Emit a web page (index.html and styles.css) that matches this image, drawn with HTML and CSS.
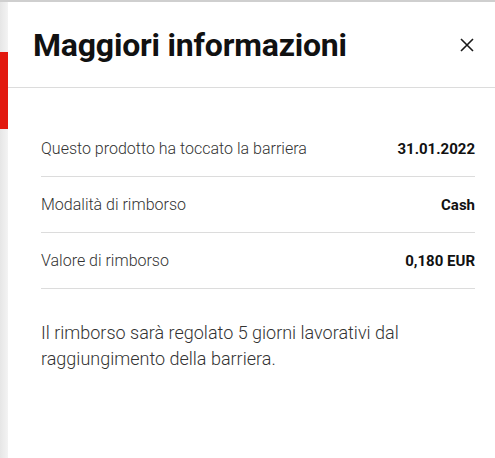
FILE: index.html
```html
<!DOCTYPE html>
<html lang="it">
<head>
<meta charset="utf-8">
<link rel="stylesheet" href="styles.css">
</head>
<body>
<div class="page">
  <aside class="side"><div class="side-mark"></div></aside>
  <section class="panel">
    <header class="head">
      <h1 class="title">Maggiori informazioni</h1>
      <button class="close" aria-label="Chiudi">
        <svg width="14" height="14" viewBox="0 0 14 14"><path d="M1 1 L13 13 M13 1 L1 13" stroke="#1a1a1a" stroke-width="1.6" fill="none"/></svg>
      </button>
    </header>
    <div class="body">
      <dl class="list">
        <div class="row"><dt>Questo prodotto ha toccato la barriera</dt><dd>31.01.2022</dd></div>
        <div class="row"><dt>Modalità di rimborso</dt><dd>Cash</dd></div>
        <div class="row"><dt>Valore di rimborso</dt><dd>0,180 EUR</dd></div>
      </dl>
      <p class="note">Il rimborso sarà regolato 5 giorni lavorativi dal raggiungimento della barriera.</p>
    </div>
  </section>
</div>
</body>
</html>
```
FILE: styles.css
```css
html, body { margin: 0; padding: 0; background: #fff; }
body { font-family: Roboto, "Liberation Sans", sans-serif; color: #1a1a1a; }
.page { display: flex; min-height: 458px; border-top: 2px solid #cfcfcf; box-sizing: border-box; }
.side { width: 8px; flex: none; background: linear-gradient(to right, #e6e6e6, #f3f3f3); padding-top: 50px; }
.side-mark { height: 77px; background: #e2190f; }
.panel { flex: 1; }
.head { display: flex; align-items: center; justify-content: space-between; height: 86px; padding: 0 21px 0 25px; border-bottom: 1px solid #dcdcdc; box-sizing: border-box; }
.title { margin: 0; font-size: 32px; font-weight: 700; letter-spacing: -0.2px; color: #111; }
.close { background: none; border: 0; padding: 0; width: 14px; height: 14px; cursor: pointer; display: flex; }
.body { padding: 33px 20px 0 33px; }
.list { margin: 0; }
.row { display: flex; justify-content: space-between; align-items: center; height: 56px; border-bottom: 1px solid #dcdcdc; box-sizing: border-box; }
.row dt { font-size: 16px; font-weight: 300; color: #333; }
.row dd { margin: 0; font-size: 15px; font-weight: 700; color: #111; }
.note { margin: 31px 0 0; font-size: 18px; line-height: 26px; font-weight: 300; color: #333; }
```
